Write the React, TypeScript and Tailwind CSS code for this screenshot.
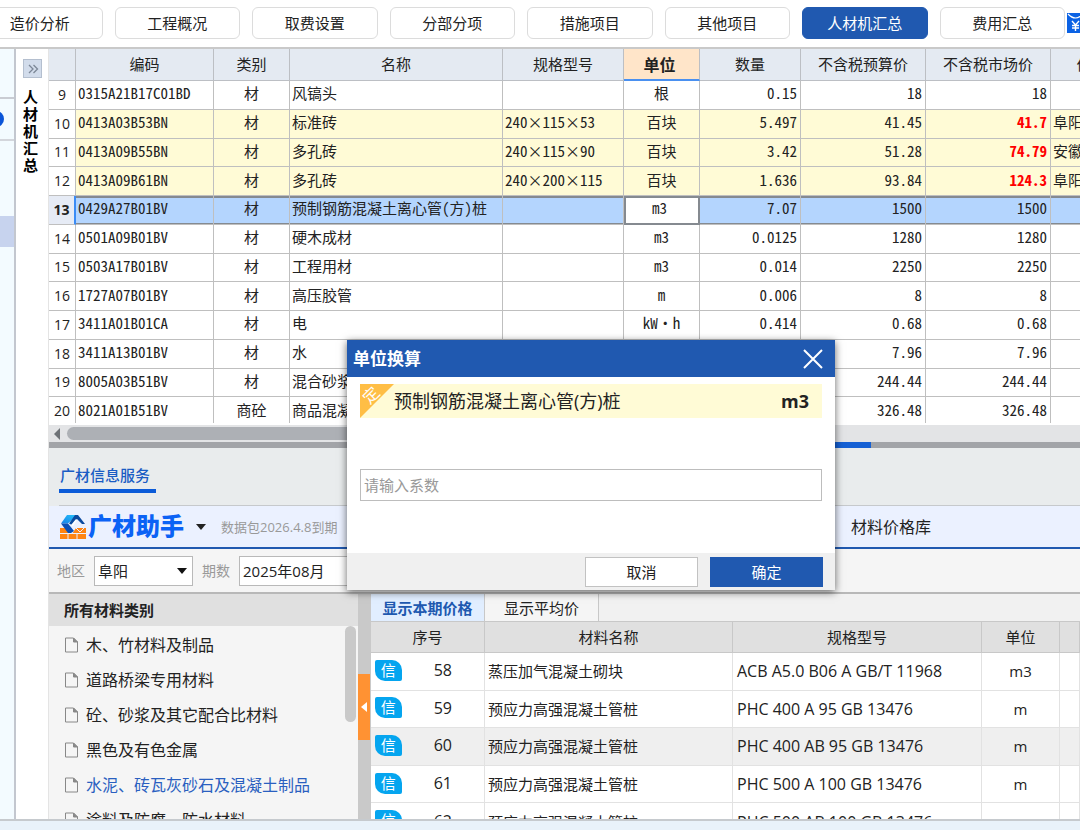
import { useState } from "react";
import { clsx } from "clsx";

const steps = ["造价分析", "工程概况", "取费设置", "分部分项", "措施项目", "其他项目", "人材机汇总", "费用汇总"];

type Material = {
    no: number;
    code: string;
    kind: string;
    name: string;
    spec?: string;
    unit?: string;
    qty?: string;
    budget: string;
    market: string;
    source?: string;
}

const materials: Material[] = [
    { no: 9, code: "0315A21B17C01BD", kind: "材", name: "风镐头", unit: "根", qty: "0.15", budget: "18", market: "18" },
    { no: 10, code: "0413A03B53BN", kind: "材", name: "标准砖", spec: "240×115×53", unit: "百块", qty: "5.497", budget: "41.45", market: "41.7", source: "阜阳" },
    { no: 11, code: "0413A09B55BN", kind: "材", name: "多孔砖", spec: "240×115×90", unit: "百块", qty: "3.42", budget: "51.28", market: "74.79", source: "安徽" },
    { no: 12, code: "0413A09B61BN", kind: "材", name: "多孔砖", spec: "240×200×115", unit: "百块", qty: "1.636", budget: "93.84", market: "124.3", source: "阜阳" },
    { no: 13, code: "0429A27B01BV", kind: "材", name: "预制钢筋混凝土离心管(方)桩", unit: "m3", qty: "7.07", budget: "1500", market: "1500" },
    { no: 14, code: "0501A09B01BV", kind: "材", name: "硬木成材", unit: "m3", qty: "0.0125", budget: "1280", market: "1280" },
    { no: 15, code: "0503A17B01BV", kind: "材", name: "工程用材", unit: "m3", qty: "0.014", budget: "2250", market: "2250" },
    { no: 16, code: "1727A07B01BY", kind: "材", name: "高压胶管", unit: "m", qty: "0.006", budget: "8", market: "8" },
    { no: 17, code: "3411A01B01CA", kind: "材", name: "电", unit: "kW·h", qty: "0.414", budget: "0.68", market: "0.68" },
    { no: 18, code: "3411A13B01BV", kind: "材", name: "水", budget: "7.96", market: "7.96" },
    { no: 19, code: "8005A03B51BV", kind: "材", name: "混合砂浆", budget: "244.44", market: "244.44" },
    { no: 20, code: "8021A01B51BV", kind: "商砼", name: "商品混凝土", budget: "326.48", market: "326.48" },
];

const categories = ["木、竹材料及制品", "道路桥梁专用材料", "砼、砂浆及其它配合比材料", "黑色及有色金属", "水泥、砖瓦灰砂石及混凝土制品", "涂料及防腐、防水材料"];

const prices = [
    { no: 58, name: "蒸压加气混凝土砌块", spec: "ACB A5.0 B06 A GB/T 11968", unit: "m3" },
    { no: 59, name: "预应力高强混凝土管桩", spec: "PHC 400 A 95 GB 13476", unit: "m" },
    { no: 60, name: "预应力高强混凝土管桩", spec: "PHC 400 AB 95 GB 13476", unit: "m" },
    { no: 61, name: "预应力高强混凝土管桩", spec: "PHC 500 A 100 GB 13476", unit: "m" },
    { no: 62, name: "预应力高强混凝土管桩", spec: "PHC 500 AB 100 GB 13476", unit: "" },
];

export default function App() {
    const [open, setOpen] = useState(true);
    return (
        <div className="relative flex h-screen flex-col overflow-hidden bg-white font-['Open_Sans','Noto_Sans_CJK_SC',sans-serif] text-[15px] leading-5 text-[#222]">
            <TopBar />
            <div className="flex min-h-0 flex-1">
                <Rail />
                <div className="flex min-w-0 flex-1 flex-col">
                    <MaterialTable />
                    <div className="flex h-[17px] shrink-0 items-center gap-[6px] bg-[#e3e4e6] pl-[4px]">
                        <svg className="h-3 w-2" viewBox="0 0 8 12"><path d="M7 0v12L1 6z" fill="#6e7277" /></svg>
                        <div className="h-[13px] w-[650px] rounded-full bg-[#adb0b5]" />
                    </div>
                    <div className="flex h-[6px] shrink-0 bg-[#a2a4a8] pl-[722px]">
                        <div className="w-[100px] bg-[#1560d4]" />
                    </div>
                    <InfoService />
                </div>
            </div>
            <footer className="h-[11px] shrink-0 border-t-2 border-[#c6cace] bg-[#e9f2fa]" />
            {open && <UnitDialog onClose={() => setOpen(false)} />}
        </div>
    )
}

function TopBar() {
    return (
        <header className="flex h-[49px] shrink-0 overflow-hidden border-b-2 border-[#c9c9c9] bg-white pt-[7px]">
            <nav className="-ml-[23px] flex h-8 flex-1 gap-3">
                {steps.map((s) => (
                    <button
                        key={s}
                        type="button"
                        className={clsx(
                            "flex-1 rounded-md border",
                            s === "人材机汇总" ? "border-[#2059b0] bg-[#2059b0] text-white" : "border-[#dcdcdc] bg-white",
                        )}>
                        {s}
                    </button>
                ))}
            </nav>
            <div className="w-[15px] overflow-hidden pt-[6px] pl-[2px]">
                <svg className="h-5 w-6 max-w-none" viewBox="0 0 24 20">
                    <rect width="24" height="20" fill="#0b62e4" />
                    <path d="M1 1q7.500 8 15 0" fill="none" stroke="#fff" strokeWidth="1.200" />
                    <path d="M5 8l3.500 4L12 8M8.500 12v6M5 12.500h7M5 15h7" fill="none" stroke="#fff" strokeWidth="1.400" />
                </svg>
            </div>
        </header>
    )
}

function Rail() {
    return (
        <>
            <aside className="flex w-4 shrink-0 flex-col overflow-hidden border-r-2 border-[#c3c7cf] bg-[#f3fbff]">
                <div className="h-[50px] border-b-2 border-[#c9ccd3]" />
                <div className="flex h-[42px] items-center border-b-2 border-[#d3d6dc]">
                    <div className="-ml-[12px] size-4 rounded-full bg-[#0b55d8]" />
                </div>
                <div className="mt-[75px] h-[31px] bg-[#c7d3ee]" />
            </aside>
            <aside className="flex w-[33px] shrink-0 flex-col border-r border-[#e4e4e4] bg-white pt-[10px] pl-[7px]">
                <button type="button" aria-label="展开" className="flex size-[19px] items-center justify-center border border-[#b4bfcf] bg-[#d2dceb]">
                    <svg className="size-3" viewBox="0 0 12 12" fill="none" stroke="#7c8797" strokeWidth="1.300">
                        <path d="M2 2l4 4-4 4M6.500 2l4 4-4 4" />
                    </svg>
                </button>
                <h1 className="mt-[10px] w-4 font-['Noto_Sans_CJK_SC',sans-serif] leading-[17px] font-bold break-all text-black">人材机汇总</h1>
            </aside>
        </>
    )
}

function MaterialTable() {
    const th = "border-r border-b border-[#bcbfc4] bg-[#e4eaf2] pb-[2px] font-normal";
    return (
        <div className="h-[376px] shrink-0 overflow-hidden bg-white pb-[2px]">
            <div className="h-full overflow-hidden">
                <table className="h-[377px] w-[1114px] table-fixed border-separate border-spacing-0 font-['Noto_Sans_Mono_CJK_SC','Liberation_Mono','Noto_Sans_CJK_SC',monospace]">
                    <colgroup>
                        <col className="w-[27px]" />
                        <col className="w-[138px]" />
                        <col className="w-[76px]" />
                        <col className="w-[213px]" />
                        <col className="w-[121px]" />
                        <col className="w-[76px]" />
                        <col className="w-[101px]" />
                        <col className="w-[125px]" />
                        <col className="w-[125px]" />
                        <col />
                    </colgroup>
                    <thead>
                        <tr className="h-[32px]">
                            <th className={th}></th>
                            <th className={th}>编码</th>
                            <th className={th}>类别</th>
                            <th className={th}>名称</th>
                            <th className={th}>规格型号</th>
                            <th className="border-r border-b-2 border-r-[#bcbfc4] border-b-[#4a90f0] bg-[#ffe5c9] pr-1 text-base leading-5 font-bold">单位</th>
                            <th className={th}>数量</th>
                            <th className={th}>不含税预算价</th>
                            <th className={th}>不含税市场价</th>
                            <th className={th}>价格来源</th>
                        </tr>
                    </thead>
                    <tbody>
                        {materials.map((m) => <MaterialRow key={m.no} m={m} />)}
                    </tbody>
                </table>
            </div>
        </div>
    )
}

function MaterialRow({ m }: { m: Material }) {
    const selected = m.no === 13;
    const td = clsx(
        "overflow-hidden whitespace-nowrap border-r border-b border-[#bfbfbf] pb-[3px]",
        selected && "bg-[#b4d5fe] shadow-[inset_0_2px_0_#858a90,inset_0_-1px_0_#858a90]",
        m.source && "bg-[#fffbd6]",
    );
    return (
        <tr>
            <td className={clsx(
                "border-b border-[#bfbfbf] text-center font-['Open_Sans',sans-serif] text-[14px]",
                selected ? "border-r-2 border-r-[#3b8cf5] bg-[#e6ebf5] font-bold" : "border-r",
            )}>{m.no}</td>
            <td className={clsx(td, "pl-[2px]")}>{m.code}</td>
            <td className={clsx(td, "text-center")}>{m.kind}</td>
            <td className={clsx(td, "pl-[2px]")}>{m.name}</td>
            <td className={clsx(td, "pl-[2px]")}>{m.spec}</td>
            <td className={selected ? "border-r border-b border-[#858a90] bg-white pr-1 pb-[3px] text-center shadow-[inset_2px_2px_0_#858a90,inset_-1px_-1px_0_#858a90]" : clsx(td, "text-center")}>{m.unit}</td>
            <td className={clsx(td, "pr-[3px] text-right")}>{m.qty}</td>
            <td className={clsx(td, "pr-[3px] text-right")}>{m.budget}</td>
            <td className={clsx(td, "pr-[3px] text-right", m.source && "font-bold text-[#f00]")}>{m.market}</td>
            <td className={clsx(td, "pl-[2px]")}>{m.source}</td>
        </tr>
    )
}

function InfoService() {
    return (
        <>
            <div className="h-[58px] shrink-0 bg-[#e9eced] pl-[10px]">
                <div className="flex h-full items-start border-b border-[#c6c9cc] pt-[17px]">
                    <a href="#service" className="w-[97px] border-b-4 border-[#0b5bd8] pb-[4px] pl-[1px] font-medium text-[#1a5cc4]">广材信息服务</a>
                </div>
            </div>
            <div className="flex h-[43px] shrink-0 items-center border-b-2 border-[#2059b0] bg-[#ebf1ff]">
                <div className="flex w-[802px] shrink-0 items-center pl-[10px]">
                    <LogoMark />
                    <span className="pb-[2px] pl-[1px] text-[24px] leading-6 font-black text-[#0b62f5]">广材助手</span>
                    <svg className="mr-[15px] ml-[12px] h-[6px] w-[10px]" viewBox="0 0 10 6"><path d="M0 0h10L5 6z" fill="#222" /></svg>
                    <span className="text-[13px] text-[#999]">数据包2026.4.8到期</span>
                </div>
                <a href="#library" className="text-base">材料价格库</a>
            </div>
            <div className="flex h-[45px] shrink-0 items-center border-b-2 border-[#b8b8b8] bg-[#f5f5f5] pl-[8px]">
                <label htmlFor="area" className="mr-[9px] text-[14px] text-[#999]">地区</label>
                <SelectBox id="area" value="阜阳" className="w-[99px]" />
                <label htmlFor="period" className="mr-[9px] ml-[9px] text-[14px] text-[#999]">期数</label>
                <SelectBox id="period" value="2025年08月" className="w-[125px]" />
            </div>
            <div className="flex min-h-0 flex-1">
                <CategoryList />
                <div className="flex w-[13px] shrink-0 flex-col bg-[#c9c9c9] pt-[80px]">
                    <button type="button" aria-label="收起" className="flex h-[66px] w-3 items-center justify-center bg-[#ff9233]">
                        <svg className="h-[10px] w-[6px]" viewBox="0 0 6 10"><path d="M6 0v10L0 5z" fill="#fff" /></svg>
                    </button>
                </div>
                <PriceTable />
            </div>
        </>
    )
}

function LogoMark() {
    return (
        <svg className="h-[26px] w-7" viewBox="0 0 28 26">
            <defs>
                <linearGradient id="roof" x1="1" y1="0" x2="0" y2="1">
                    <stop offset="0" stopColor="#25c4fb" />
                    <stop offset="1" stopColor="#1580e8" />
                </linearGradient>
            </defs>
            <path d="M1 14h7l5 6 4-6h10v11H1z" fill="#ff8412" />
            <path d="M0 19.500h28M9 19v7M18 19v7M17 14l4 4 4-4" fill="none" stroke="#ebf1ff" />
            <path d="M8 1h10L9 9.500H2z" fill="url(#roof)" />
            <path d="M2 9.500h7l6 7.500-3 2H9z" fill="#0a4fb5" />
            <path d="M16 1h3l7 9h-3l-5-5-5 6-3-1.500z" fill="#0a4a9f" />
            <path d="M12 11l5-6 1 1-4 6z" fill="#fff" />
        </svg>
    )
}

function SelectBox({ id, value, className }: { id: string, value: string, className: string }) {
    return (
        <span className={clsx("relative flex items-center", className)}>
            <select id={id} defaultValue={value} className="h-[30px] w-full appearance-none border border-[#b9b9b9] bg-white pl-[3px]">
                <option>{value}</option>
            </select>
            <svg className="pointer-events-none absolute right-[6px] h-[6px] w-[10px]" viewBox="0 0 10 6"><path d="M0 0h10L5 6z" fill="#111" /></svg>
        </span>
    )
}

function CategoryList() {
    return (
        <div className="flex w-[309px] shrink-0 flex-col bg-[#f5f5f5]">
            <h2 className="h-8 shrink-0 bg-[#e0e0e0] pl-[15px] leading-8 font-bold">所有材料类别</h2>
            <div className="flex min-h-0 flex-1 overflow-hidden">
                <ul className="min-w-0 flex-1 pt-[1px]">
                    {categories.map((c) => (
                        <li key={c}>
                            <a href="#category" className={clsx("flex h-[35px] items-center gap-[8px] pl-[16px] text-base whitespace-nowrap", c.startsWith("水泥") && "text-[#2a5fc0]")}>
                                <svg className="h-4 w-[13px] shrink-0" viewBox="0 0 13 16" fill="none" stroke="#888">
                                    <path d="M.5 1h8l4 4v10H.5z" />
                                    <path d="M8.500 1v4h4z" fill="#888" />
                                </svg>
                                {c}
                            </a>
                        </li>
                    ))}
                </ul>
                <div className="mr-[2px] h-[96px] w-[11px] rounded-full bg-[#c9c9c9]" />
            </div>
        </div>
    )
}

function PriceTable() {
    const th = "border-r border-b border-[#c8c8c8] bg-[#e0e0e0] font-normal";
    const td = "border-r border-b border-[#e2e2e2] whitespace-nowrap";
    return (
        <div className="min-w-0 flex-1 overflow-hidden bg-white">
            <div className="flex h-7 border-b border-[#c8c8c8] bg-[#f1f1f1]">
                <button type="button" className="w-[114px] border-r border-[#c8c8c8] bg-[#e1eeff] font-bold text-[#2059b0]">显示本期价格</button>
                <button type="button" className="w-[114px] border-r border-[#c8c8c8] bg-[#f5f5f5]">显示平均价</button>
            </div>
            <table className="h-[219px] w-full table-fixed border-separate border-spacing-0">
                <colgroup>
                    <col className="w-[114px]" />
                    <col className="w-[248px]" />
                    <col className="w-[249px]" />
                    <col className="w-[78px]" />
                    <col />
                </colgroup>
                <thead>
                    <tr className="h-[31px]">
                        <th className={th}>序号</th>
                        <th className={th}>材料名称</th>
                        <th className={th}>规格型号</th>
                        <th className={th}>单位</th>
                        <th className={th}></th>
                    </tr>
                </thead>
                <tbody>
                    {prices.map((p) => (
                        <tr key={p.no} className={p.no === 60 ? "bg-[#efefef]" : "bg-white"}>
                            <td className={td}>
                                <div className="flex items-center pb-[2px] pl-[4px]">
                                    <span className="h-[21px] w-[27px] rounded-[2px] rounded-tr-[10px] rounded-bl-[10px] bg-[#05a5ef] text-center leading-[21px] text-white">信</span>
                                    <span className="w-[83px] text-center text-base leading-5">{p.no}</span>
                                </div>
                            </td>
                            <td className={clsx(td, "pl-[3px]")}>{p.name}</td>
                            <td className={clsx(td, "pl-[4px] text-base leading-5")}>{p.spec}</td>
                            <td className={clsx(td, "text-center")}>{p.unit}</td>
                            <td className={td}></td>
                        </tr>
                    ))}
                </tbody>
            </table>
        </div>
    )
}

function UnitDialog({ onClose }: { onClose: () => void }) {
    const [factor, setFactor] = useState("");
    return (
        <div role="dialog" aria-labelledby="unit-title" className="absolute top-[340px] left-[347px] flex h-[250px] w-[488px] flex-col bg-white shadow-[0_2px_8px_rgba(0,0,0,0.6)]">
            <div className="flex h-[37px] items-center justify-between bg-[#2059b0] pr-[12px] pl-[6px] text-white">
                <h2 id="unit-title" className="text-[17px] font-bold">单位换算</h2>
                <button type="button" aria-label="关闭" onClick={onClose}>
                    <svg className="size-5" viewBox="0 0 20 20"><path d="M1 1l18 18M19 1L1 19" stroke="#fff" strokeWidth="2" /></svg>
                </button>
            </div>
            <div className="flex flex-1 flex-col px-[13px] pt-[7px]">
                <div className="flex h-[34px] items-center bg-[#fffbd6] pr-[13px]">
                    <svg className="h-[34px] w-[34px]" viewBox="0 0 34 34">
                        <path d="M0 0h34L0 34z" fill="#ffbe45" />
                        <text x="11" y="17" fontSize="16" fill="#fff" textAnchor="middle" transform="rotate(-45 11 11)">定</text>
                    </svg>
                    <span className="flex-1 text-[18px]">预制钢筋混凝土离心管(方)桩</span>
                    <b className="text-[18px]">m3</b>
                </div>
                <input
                    aria-label="系数"
                    value={factor}
                    onChange={(e) => setFactor(e.target.value)}
                    placeholder="请输入系数"
                    className="mt-[51px] h-8 w-full border border-[#bdbdbd] px-[3px] placeholder:text-[#999]" />
            </div>
            <div className="flex h-[37px] items-center justify-end gap-3 bg-[#f0f0f0] pr-[12px]">
                <button type="button" onClick={onClose} className="h-[30px] w-[113px] border border-[#c2c2c2] bg-white">取消</button>
                <button type="button" onClick={onClose} className="h-[30px] w-[113px] bg-[#2059b0] text-white">确定</button>
            </div>
        </div>
    )
}
